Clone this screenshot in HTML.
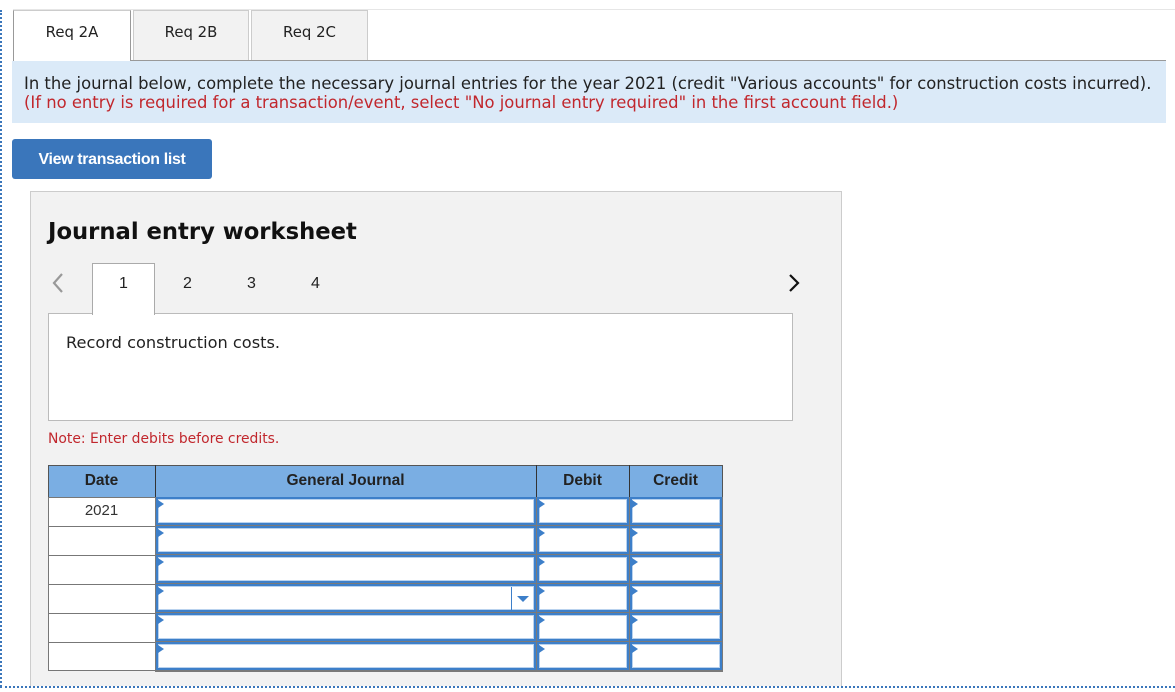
<!DOCTYPE html>
<html><head><meta charset="utf-8"><style>
*{margin:0;padding:0;box-sizing:border-box}
body{width:1175px;height:692px;background:#fff;position:relative;overflow:hidden;font-family:"DejaVu Sans","Liberation Sans",sans-serif;color:#222}
.a{position:absolute}
.tab{position:absolute;top:10px;height:51px;border:1px solid #ccc;border-bottom:none;background:#f2f2f2;font-size:14.9px;text-align:center;line-height:42px;color:#222}
.inp{position:absolute;background:#fff;border:2px solid #3d7fc9;box-shadow:inset 0 0 0 1px #b9d2ee}
.inp:before{content:"";position:absolute;left:0;top:1px;border-left:6px solid #3d7fc9;border-top:4px solid transparent;border-bottom:4px solid transparent}
.cell{position:absolute;border:1px solid #777;background:#fff}
</style></head><body>
<div class="a" style="left:13px;top:9px;width:1162px;height:1px;background:#e6e6e6"></div>

<div class="tab" style="left:13px;width:118px;background:#fff;border-left:1px solid #999;border-right:1px solid #999;height:52px">Req 2A</div>
<div class="tab" style="left:133px;width:116px">Req 2B</div>
<div class="tab" style="left:251px;width:117px">Req 2C</div>
<div class="a" style="left:130px;top:60px;width:1036px;height:1px;background:#999"></div>

<div class="a" style="left:12px;top:61px;width:1154px;height:62px;background:#dbeaf8"></div>
<div class="a" style="left:24px;top:74px;font-size:16.4px;line-height:19px;white-space:nowrap;color:#222">In the journal below, complete the necessary journal entries for the year 2021 (credit "Various accounts" for construction costs incurred).<br><span style="color:#c1272d">(If no entry is required for a transaction/event, select "No journal entry required" in the first account field.)</span></div>

<div class="a" style="left:12px;top:139px;width:200px;height:40px;background:#3a76bb;border-radius:3px;color:#fff;font-family:'Liberation Sans',sans-serif;font-weight:bold;font-size:15.9px;line-height:42px;text-align:center;letter-spacing:-0.3px">View transaction list</div>

<div class="a" style="left:30px;top:191px;width:812px;height:500px;background:#f2f2f2;border:1px solid #ccc"></div>
<div class="a" style="left:48px;top:219px;font-size:22.7px;font-weight:bold;color:#111">Journal entry worksheet</div>

<svg class="a" style="left:51px;top:272px" width="14" height="22"><path d="M11 2 L3 11 L11 20" fill="none" stroke="#999" stroke-width="2.2"/></svg>
<svg class="a" style="left:787px;top:273px" width="14" height="20"><path d="M3 2 L11 10 L3 18" fill="none" stroke="#111" stroke-width="2.2"/></svg>

<div class="a" style="left:48px;top:313px;width:745px;height:108px;background:#fff;border:1px solid #bbb"></div>
<div class="a" style="left:92px;top:263px;width:63px;height:52px;background:#fff;border:1px solid #aaa;border-bottom:none"></div>
<div class="a" style="top:275px;left:0;font-family:'Liberation Sans',sans-serif;font-size:16px;color:#222">
<span class="a" style="left:119px">1</span><span class="a" style="left:183px">2</span><span class="a" style="left:247px">3</span><span class="a" style="left:311px">4</span></div>
<div class="a" style="left:66px;top:333px;font-size:16.2px;color:#222">Record construction costs.</div>
<div class="a" style="left:48px;top:431px;font-size:13.9px;color:#c1272d">Note: Enter debits before credits.</div>

<div class="a" style="left:48px;top:465px;width:675px;height:33px;background:#7aaee3;border:1px solid #555"></div>
<div class="a" style="left:155px;top:465px;width:1px;height:33px;background:#333"></div>
<div class="a" style="left:536px;top:465px;width:1px;height:33px;background:#333"></div>
<div class="a" style="left:629px;top:465px;width:1px;height:33px;background:#333"></div>
<div class="a" style="top:472px;left:0;font-family:'Liberation Sans',sans-serif;font-size:15.5px;font-weight:bold;color:#222;width:723px;height:20px">
<span class="a" style="left:48px;width:107px;text-align:center">Date</span>
<span class="a" style="left:155px;width:381px;text-align:center">General Journal</span>
<span class="a" style="left:536px;width:93px;text-align:center">Debit</span>
<span class="a" style="left:629px;width:93px;text-align:center">Credit</span></div>

<div class="cell" style="left:48px;top:497px;width:108px;height:30px"></div>
<div class="cell" style="left:48px;top:526px;width:108px;height:30px"></div>
<div class="cell" style="left:48px;top:555px;width:108px;height:30px"></div>
<div class="cell" style="left:48px;top:584px;width:108px;height:30px"></div>
<div class="cell" style="left:48px;top:613px;width:108px;height:30px"></div>
<div class="cell" style="left:48px;top:642px;width:108px;height:29px"></div>
<div class="a" style="left:48px;top:502px;width:107px;text-align:center;font-family:'Liberation Sans',sans-serif;font-size:15px;color:#333">2021</div>
<div class="a" style="left:155px;top:497px;width:568px;height:175px;background:#7a7a7a"></div>

<div class="inp" style="left:156px;top:497px;width:380px;height:28px"></div>
<div class="inp" style="left:537px;top:497px;width:92px;height:28px"></div>
<div class="inp" style="left:630px;top:497px;width:92px;height:28px"></div>
<div class="inp" style="left:156px;top:526px;width:380px;height:28px"></div>
<div class="inp" style="left:537px;top:526px;width:92px;height:28px"></div>
<div class="inp" style="left:630px;top:526px;width:92px;height:28px"></div>
<div class="inp" style="left:156px;top:555px;width:380px;height:28px"></div>
<div class="inp" style="left:537px;top:555px;width:92px;height:28px"></div>
<div class="inp" style="left:630px;top:555px;width:92px;height:28px"></div>
<div class="inp" style="left:156px;top:584px;width:380px;height:28px"></div>
<div class="a" style="left:511px;top:587px;width:1px;height:23px;background:#3d7fc9"></div>
<div class="a" style="left:517px;top:596px;border-top:6px solid #3d7fc9;border-left:6px solid transparent;border-right:6px solid transparent"></div>
<div class="inp" style="left:537px;top:584px;width:92px;height:28px"></div>
<div class="inp" style="left:630px;top:584px;width:92px;height:28px"></div>
<div class="inp" style="left:156px;top:613px;width:380px;height:28px"></div>
<div class="inp" style="left:537px;top:613px;width:92px;height:28px"></div>
<div class="inp" style="left:630px;top:613px;width:92px;height:28px"></div>
<div class="inp" style="left:156px;top:642px;width:380px;height:28px"></div>
<div class="inp" style="left:537px;top:642px;width:92px;height:28px"></div>
<div class="inp" style="left:630px;top:642px;width:92px;height:28px"></div>

<div class="a" style="left:0;top:10px;width:0;height:680px;border-left:2px dotted #3a76bb"></div>
<div class="a" style="left:0;top:686px;width:1175px;height:6px;background:#fff;border-top:2px dotted #3a76bb"></div>
</body></html>
